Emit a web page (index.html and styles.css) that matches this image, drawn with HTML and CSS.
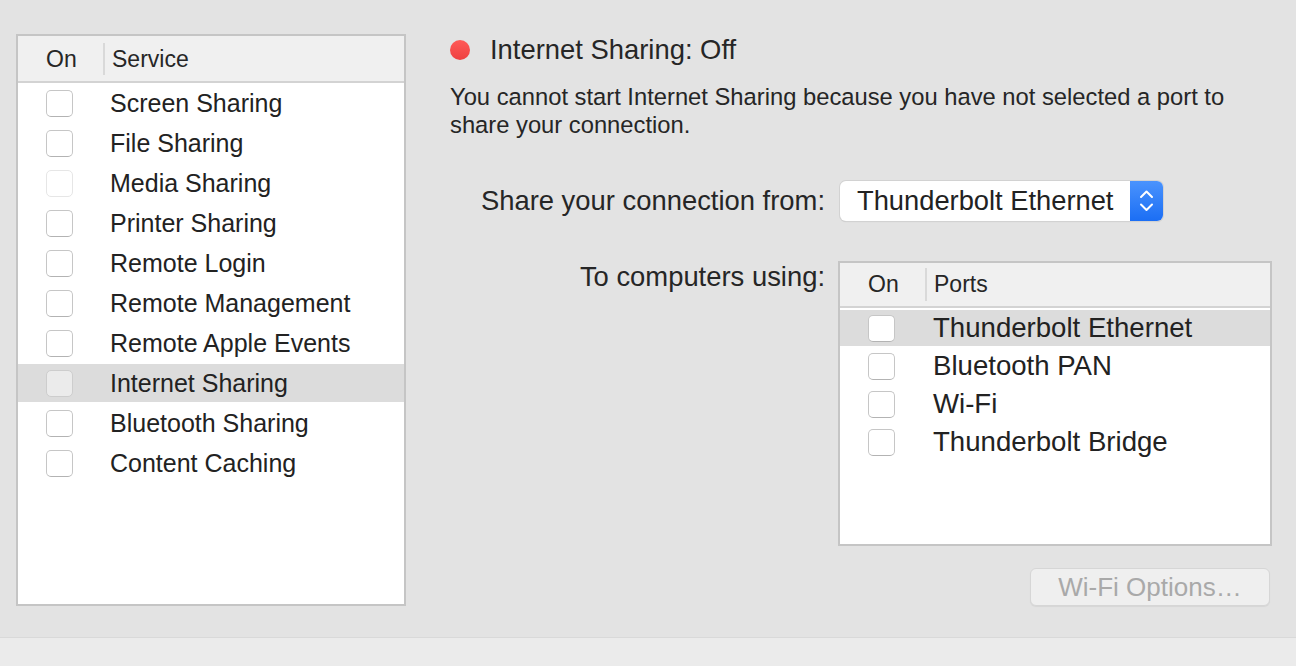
FILE: index.html
```html
<!DOCTYPE html>
<html lang="en">
<head>
    <meta charset="UTF-8">
    <meta name="viewport" content="width=device-width, initial-scale=1.0">
    <title>Sharing</title>
    <link rel="stylesheet" href="styles.css">
</head>
<body>

    <div class="main">
        <div class="table services">
            <div class="table-head">
                <div class="head-cell">On</div>
                <div class="head-cell head-name">Service</div>
            </div>
            <div class="table-body">
                <div class="row"><span class="check"></span><span class="name">Screen Sharing</span></div>
                <div class="row"><span class="check"></span><span class="name">File Sharing</span></div>
                <div class="row"><span class="check check-off"></span><span class="name">Media Sharing</span></div>
                <div class="row"><span class="check"></span><span class="name">Printer Sharing</span></div>
                <div class="row"><span class="check"></span><span class="name">Remote Login</span></div>
                <div class="row"><span class="check"></span><span class="name">Remote Management</span></div>
                <div class="row"><span class="check"></span><span class="name">Remote Apple Events</span></div>
                <div class="row selected"><span class="check check-grey"></span><span class="name">Internet Sharing</span></div>
                <div class="row"><span class="check"></span><span class="name">Bluetooth Sharing</span></div>
                <div class="row"><span class="check"></span><span class="name">Content Caching</span></div>
            </div>
        </div>

        <div class="detail">
            <div class="status">
                <span class="dot"></span>
                <span class="status-text">Internet Sharing: Off</span>
            </div>
            <p class="note">You cannot start Internet Sharing because you have not selected a port to share your connection.</p>

            <div class="form">
                <div class="label">Share your connection from:</div>
                <div class="popup">
                    <span class="popup-text">Thunderbolt Ethernet</span>
                    <span class="stepper">
                        <svg width="33" height="40" viewBox="0 0 33 40">
                            <polyline points="11,16 16.5,10.5 22,16" fill="none" stroke="#fff" stroke-width="2" stroke-linecap="round" stroke-linejoin="round"/>
                            <polyline points="11,23.5 16.5,29 22,23.5" fill="none" stroke="#fff" stroke-width="2" stroke-linecap="round" stroke-linejoin="round"/>
                        </svg>
                    </span>
                </div>

                <div class="label label-top">To computers using:</div>
                <div class="ports-col">
                    <div class="table ports">
                        <div class="table-head">
                            <div class="head-cell">On</div>
                            <div class="head-cell head-name">Ports</div>
                        </div>
                        <div class="table-body">
                            <div class="row selected"><span class="check"></span><span class="name">Thunderbolt Ethernet</span></div>
                            <div class="row"><span class="check"></span><span class="name">Bluetooth PAN</span></div>
                            <div class="row"><span class="check"></span><span class="name">Wi-Fi</span></div>
                            <div class="row"><span class="check"></span><span class="name">Thunderbolt Bridge</span></div>
                        </div>
                    </div>
                    <button class="options" disabled>Wi-Fi Options…</button>
                </div>
            </div>
        </div>
    </div>

    <div class="footer"></div>

</body>
</html>
```

FILE: styles.css
```css
* {
    box-sizing: border-box;
}
body {
    margin: 0;
    font-family: "Liberation Sans", Arial, sans-serif;
    color: #222;
    background-color: #e3e3e3;
    overflow: hidden;
}
.main {
    display: flex;
    height: 637px;
    padding: 34px 0 0 16px;
}
.footer {
    height: 29px;
    background-color: #ebebeb;
    border-top: 1px solid #d9d9d9;
}

/* tables */
.table {
    background-color: #fff;
    border: 2px solid #c5c5c5;
}
.services {
    width: 390px;
    height: 572px;
}
.table-head {
    display: grid;
    grid-template-columns: 85px 1fr;
    background-color: #f0f0f0;
    border-bottom: 2px solid #d3d3d3;
    padding: 7px 0 6px;
    font-size: 23px;
    color: #262626;
}
.head-cell {
    line-height: 32px;
    padding-left: 28px;
}
.head-cell.head-name {
    border-left: 2px solid #d9d9d9;
    padding-left: 7px;
}
.table-body {
    display: flex;
    flex-direction: column;
    gap: 2px;
    padding-top: 1px;
}
.row {
    display: grid;
    grid-template-columns: 85px 1fr;
    align-items: center;
    height: 38px;
    font-size: 25px;
}
.row.selected {
    background-color: #dcdcdc;
}
.check {
    width: 27px;
    height: 27px;
    margin-left: 28px;
    margin-top: 1px;
    background-color: #fff;
    border: 1px solid #c6c6c6;
    border-bottom-color: #b3b3b3;
    border-radius: 5px;
}
.check-off {
    border-color: #e6e6e6;
}
.check-grey {
    background-color: #ebebeb;
    border-color: #cdcdcd;
}
.name {
    padding-left: 7px;
}

/* right side */
.detail {
    width: 822px;
    margin-left: 44px;
}
.status {
    display: flex;
    align-items: center;
    height: 32px;
}
.dot {
    width: 20px;
    height: 20px;
    border-radius: 50%;
    background: linear-gradient(#ff5a57, #ee4040);
    margin-right: 20px;
}
.status-text {
    font-size: 27.4px;
    color: #262626;
}
.note {
    margin: 17px 0 0;
    font-size: 23.75px;
    line-height: 28px;
    color: #262626;
}
.form {
    display: grid;
    grid-template-columns: 375px 434px;
    column-gap: 13px;
    row-gap: 40px;
    margin-top: 42px;
}
.label {
    text-align: right;
    font-size: 27.4px;
    line-height: 40px;
    color: #262626;
}
.label.label-top {
    line-height: 32px;
}
.popup {
    display: flex;
    width: 323px;
    height: 40px;
    margin-left: 2px;
    background-color: #fff;
    border-radius: 6px;
    box-shadow: 0 0 0 1px #d2d2d2, 0 1px 1px rgba(0,0,0,0.15);
}
.popup-text {
    flex: 1;
    padding-left: 17px;
    font-size: 27.3px;
    line-height: 40px;
}
.stepper {
    width: 33px;
    height: 40px;
    border-radius: 0 6px 6px 0;
    background: linear-gradient(#4a93fd, #1b6ef4);
}
.stepper svg {
    display: block;
}
.ports {
    height: 285px;
}
.ports .table-head {
    padding: 5px 0;
}
.ports .head-cell {
    line-height: 33px;
}
.ports .table-body {
    padding-top: 2px;
}
.ports .row {
    height: 36px;
    font-size: 27.6px;
}
.ports .check {
    margin-top: 0;
}
.ports .name {
    padding-left: 8px;
}
.ports-col {
    display: flex;
    flex-direction: column;
    align-items: flex-end;
}
.ports-col .ports {
    width: 100%;
}
.options {
    width: 240px;
    height: 38px;
    margin: 22px 2px 0 0;
    font-family: "Liberation Sans", Arial, sans-serif;
    font-size: 26px;
    color: #a9a9a9;
    background-color: #efefef;
    border: 1px solid #d6d6d6;
    border-radius: 6px;
    box-shadow: 0 1px 1px rgba(0,0,0,0.06);
    padding: 0;
}
```
